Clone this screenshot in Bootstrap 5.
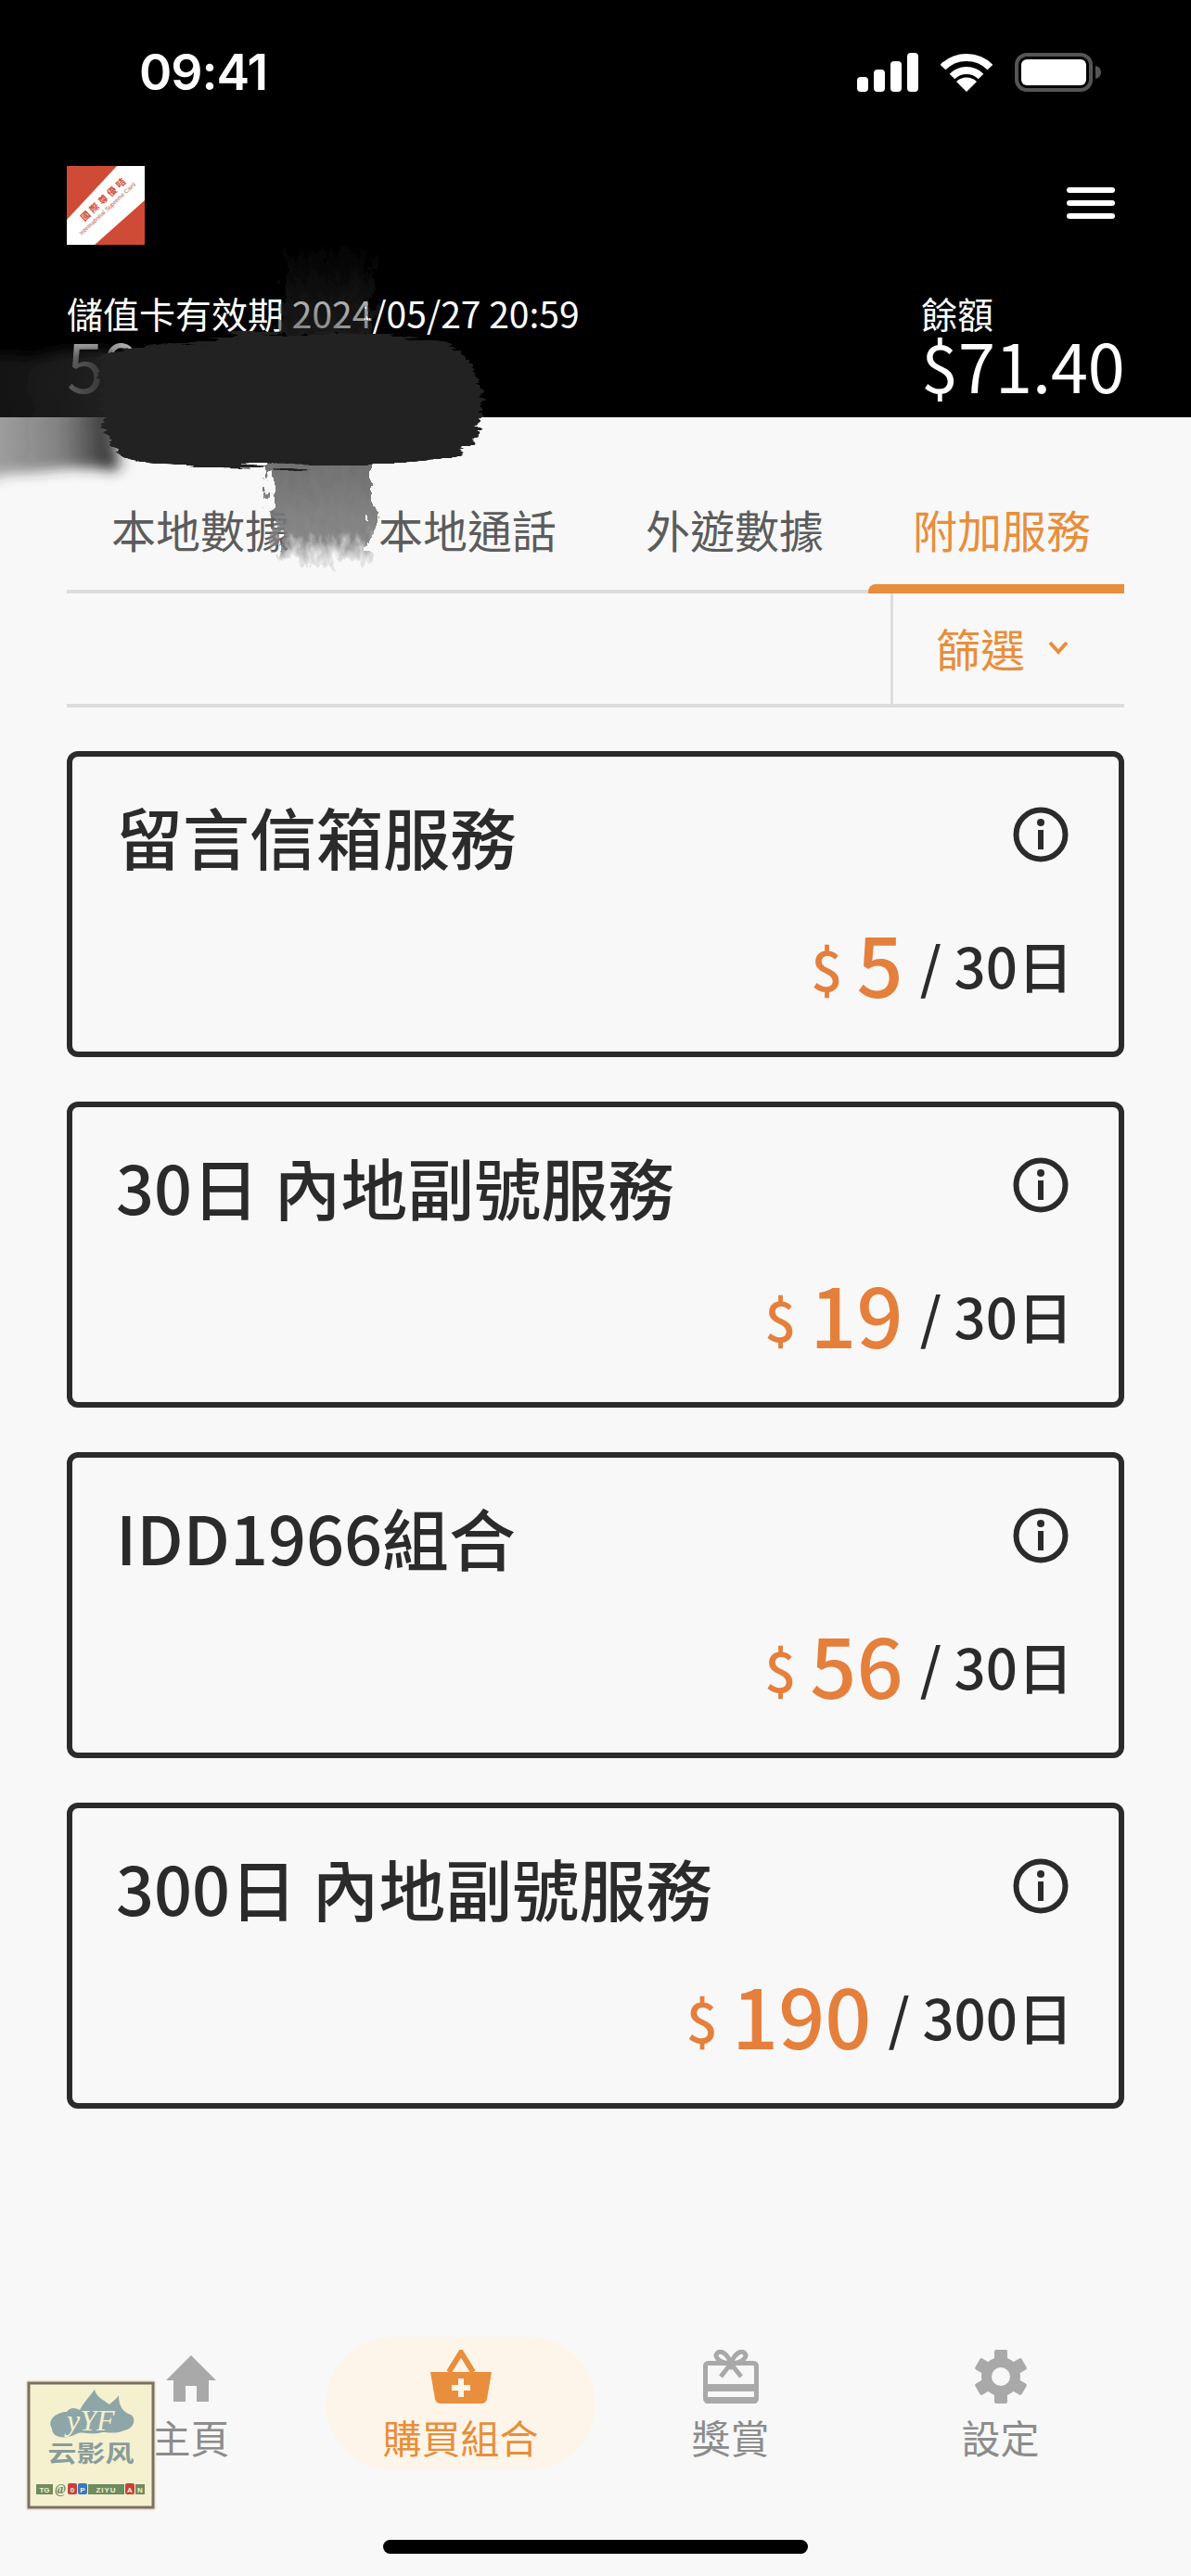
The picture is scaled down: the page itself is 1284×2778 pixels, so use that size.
<!DOCTYPE html>
<html lang="zh-Hant">
<head>
  <meta charset="UTF-8">
  <title>附加服務</title>
  <meta name="viewport" content="width=device-width, initial-scale=1">
  <link href="https://cdn.jsdelivr.net/npm/bootstrap@5.3.0/dist/css/bootstrap.min.css" rel="stylesheet">
  <style>
    html, body { width: 1284px; height: 2778px; overflow: hidden; }
    body { background: #f8f8f8; font-family: "Noto Sans CJK TC", "Noto Sans", sans-serif; color: #2b2b2b; position: relative; }
    .page-wrap { height: 2778px; }

    /* header */
    .hero { height: 450px; background: #000; color: #fff; padding: 0 72px; }
    .status-row { height: 55px; margin-top: 50px; padding: 0 50px 0 78px; margin-right: -26px; }
    .status-time { font-family: Inter, "Liberation Sans", sans-serif; font-size: 53.500px; font-weight: 600; line-height: 55px; letter-spacing: -1px; }
    .status-icons { gap: 22px; }
    .brand-row { height: 85px; margin-top: 74px; padding-right: 10px; }
    .menu-lines { width: 52px; gap: 8px; margin-bottom: 6px; }
    .menu-lines span { height: 6px; background: #fff; border-radius: 3px; }
    .info-row { margin-top: 52px; }
    .info-label { font-size: 39px; line-height: 42px; }
    .info-value { font-size: 72px; line-height: 70px; font-weight: 400; }
    .info-value.acct-num { color: #aaa; }
    .balance-col { width: 219px; }

    /* tabs */
    .tab-strip { margin: 0 72px; height: 190px; overflow: hidden; }
    .tab-list { margin-top: 78px; height: 112px; width: 1140px; flex-wrap: nowrap; border-bottom: 4px solid #ddd; position: relative; }
    .tab-item { flex: 0 0 288px; text-align: center; font-size: 48px; line-height: 72px; color: #5c5c5c; padding: 6px 0 0; position: relative; }
    .tab-item:hover { color: #5c5c5c; }
    .tab-item.tab-on { color: #e88e3c; flex: 0 0 276px; white-space: nowrap; }
    .tab-item.tab-on::after { content: ""; position: absolute; left: 0; right: 0; bottom: -4px; height: 10px; background: #e88e3c; border-top-left-radius: 8px; }
    .tab-item.tab-on span { display: block; margin-right: -12px; }
    .filter-row { margin: 0 72px; height: 123px; border-bottom: 4px solid #ddd; }
    .filter-cell { width: 252px; border-left: 3px solid #ddd; color: #e88e3c; font-size: 48px; line-height: 72px; padding-left: 46px; padding-bottom: 3px; gap: 24px; }

    /* plans */
    .plan-list { margin: 47px 72px 0; gap: 48px; }
    .plan-box { height: 330px; border: 6px solid #2b2b2b; border-radius: 12px; background: transparent; padding: 40px 49px 0 47px; }
    .plan-title { font-size: 72px; font-weight: 500; line-height: 90px; color: #2b2b2b; margin: 0; }
    .plan-info { margin: 14px 5px 0 0; }
    .plan-price { margin-top: 37px; line-height: 100px; }
    .plan-cur { font-size: 60px; font-weight: 500; color: #e57f3c; margin-right: 15px; padding-top: 10px; }
    .plan-num { font-size: 88px; font-weight: 500; color: #e57f3c; margin-right: 18px; }
    .plan-per { font-size: 60px; font-weight: 500; color: #2b2b2b; padding-top: 4px; }

    /* bottom nav */
    .bottom-nav { position: absolute; left: 60px; right: 60px; top: 2520px; }
    .nav-cell { flex: 0 0 291px; height: 144px; color: #8c8c8c; font-size: 42px; line-height: 50px; border-radius: 72px; padding-top: 11px; }
    .nav-cell.nav-on { background: #fdf5e9; color: #e88e3c; }
    .nav-glyph { height: 58px; margin-bottom: 14px; }
    .home-bar { position: absolute; left: 413px; top: 2739px; width: 458px; height: 15px; background: #000; border-radius: 8px; }

    /* overlays */
    .scribble { position: absolute; left: 0; top: 0; pointer-events: none; }
    .stamp { position: absolute; left: 26px; top: 2565px; }
  </style>
</head>
<body>
<div class="page-wrap d-flex flex-column">

  <!-- Black account header -->
  <header class="hero">
    <div class="status-row d-flex justify-content-between align-items-center">
      <span class="status-time">09:41</span>
      <div class="status-icons d-flex align-items-center">
        <svg width="66" height="42" viewBox="0 0 66 42"><rect x="0" y="26" width="12" height="16" rx="4" fill="#fff"/><rect x="18" y="18" width="12" height="24" rx="4" fill="#fff"/><rect x="36" y="9" width="12" height="33" rx="4" fill="#fff"/><rect x="54" y="0" width="12" height="42" rx="4" fill="#fff"/></svg>
        <svg width="60" height="42" viewBox="0 0 60 42"><path d="M4.500 15.500A36 36 0 0 1 55.500 15.500M14.500 25.500A22 22 0 0 1 45.500 25.500" fill="none" stroke="#fff" stroke-width="8"/><path d="M30 42L19 31A15.500 15.500 0 0 1 41 31Z" fill="#fff"/></svg>
        <svg width="94" height="42" viewBox="0 0 94 42"><rect x="2" y="2" width="80" height="38" rx="11" fill="none" stroke="#555" stroke-width="4"/><rect x="7" y="7" width="70" height="28" rx="6" fill="#fff"/><path d="M87 14C91 15 93 18 93 21S91 27 87 28Z" fill="#555"/></svg>
      </div>
    </div>

    <div class="brand-row d-flex justify-content-between align-items-center">
      <svg width="84" height="85" viewBox="0 0 84 85">
        <rect width="84" height="85" fill="#cf4b35"/>
        <path d="M54 0H84V37L30 85H0V58Z" fill="#fff"/>
        <text transform="translate(19 60) rotate(-43)" font-family="Noto Sans CJK TC, serif" font-size="10" font-weight="700" fill="#cf4b35" letter-spacing="3">國際尊優咭</text>
        <text transform="translate(16 75) rotate(-43)" font-family="Liberation Sans, sans-serif" font-size="6.500" fill="#b8574a">International Supreme Card</text>
      </svg>
      <div class="menu-lines d-flex flex-column">
        <span></span><span></span><span></span>
      </div>
    </div>

    <div class="info-row d-flex justify-content-between">
      <div>
        <div class="info-label">儲值卡有效期 2024/05/27 20:59</div>
        <div class="info-value acct-num">59</div>
      </div>
      <div class="balance-col">
        <div class="info-label">餘額</div>
        <div class="info-value">$71.40</div>
      </div>
    </div>
  </header>

  <!-- Tabs -->
  <div class="tab-strip">
    <nav class="nav tab-list">
      <a class="nav-link tab-item" href="#">本地數據</a>
      <a class="nav-link tab-item" href="#">本地通話</a>
      <a class="nav-link tab-item" href="#">外遊數據</a>
      <a class="nav-link tab-item tab-on" href="#"><span>附加服務</span></a>
    </nav>
  </div>

  <div class="filter-row d-flex justify-content-end">
    <div class="filter-cell d-flex align-items-center">
      <span>篩選</span>
      <svg width="24" height="16" viewBox="0 0 24 16"><path d="M3 3L12 13L21 3" fill="none" stroke="#e88e3c" stroke-width="4"/></svg>
    </div>
  </div>

  <!-- Plans -->
  <div class="plan-list d-flex flex-column" id="planList"></div>

</div>

<!-- Bottom navigation -->
<nav class="bottom-nav d-flex">
  <a class="nav-cell d-flex flex-column align-items-center text-decoration-none" href="#">
    <div class="nav-glyph">
      <svg width="54" height="54" viewBox="0 -4 54 54"><path d="M27 0L54 27H46V50H33V33H21V50H8V27H0Z" fill="#a9a9a9"/></svg>
    </div>
    <span>主頁</span>
  </a>
  <a class="nav-cell nav-on d-flex flex-column align-items-center text-decoration-none" href="#">
    <div class="nav-glyph">
      <svg width="66" height="58" viewBox="0 0 66 58"><path d="M20 24L33 3L46 24" fill="none" stroke="#e88e3c" stroke-width="6"/><path d="M0 24H66L61 53Q60 58 55 58H11Q6 58 5 53Z" fill="#e88e3c"/><path d="M33 31V51M23 41H43" stroke="#fdf5e9" stroke-width="6"/></svg>
    </div>
    <span>購買組合</span>
  </a>
  <a class="nav-cell d-flex flex-column align-items-center text-decoration-none" href="#">
    <div class="nav-glyph">
      <svg width="60" height="58" viewBox="0 0 60 58"><rect x="2.500" y="14.500" width="55" height="41" rx="3" fill="none" stroke="#a9a9a9" stroke-width="5"/><rect x="2" y="37" width="56" height="8" fill="#a9a9a9"/><rect x="2" y="51" width="56" height="7" rx="2" fill="#a9a9a9"/><path d="M30 15C26 3 18 0 15 4S17 14 30 15C43 14 48 8 45 4S34 3 30 15ZM30 15L19 29M30 15L41 29" fill="none" stroke="#a9a9a9" stroke-width="5"/></svg>
    </div>
    <span>獎賞</span>
  </a>
  <a class="nav-cell d-flex flex-column align-items-center text-decoration-none" href="#">
    <div class="nav-glyph">
      <svg width="58" height="58" viewBox="0 0 58 58">
        <g fill="#a9a9a9">
          <rect x="22" y="0" width="14" height="58" rx="2"/>
          <rect x="22" y="0" width="14" height="58" rx="2" transform="rotate(60 29 29)"/>
          <rect x="22" y="0" width="14" height="58" rx="2" transform="rotate(120 29 29)"/>
          <circle cx="29" cy="29" r="21"/>
        </g>
        <circle cx="29" cy="29" r="10" fill="#f8f8f8"/>
      </svg>
    </div>
    <span>設定</span>
  </a>
</nav>
<div class="home-bar"></div>

<!-- Brush-stroke redaction over the account number -->
<svg class="scribble" width="1284" height="640" viewBox="0 0 1284 640">
  <defs>
    <filter id="brush" x="-20%" y="-20%" width="140%" height="140%">
      <feTurbulence type="fractalNoise" baseFrequency="0.012 0.16" numOctaves="3" seed="4"/>
      <feDisplacementMap in="SourceGraphic" scale="24" xChannelSelector="R" yChannelSelector="G"/>
    </filter>
    <filter id="smudge" x="-20%" y="-20%" width="140%" height="140%">
      <feTurbulence type="fractalNoise" baseFrequency="0.01 0.12" numOctaves="3" seed="11"/>
      <feDisplacementMap in="SourceGraphic" scale="30" xChannelSelector="R" yChannelSelector="G"/>
      <feGaussianBlur stdDeviation="7"/>
    </filter>
    <filter id="speck" x="-30%" y="-20%" width="160%" height="140%">
      <feTurbulence type="fractalNoise" baseFrequency="0.09 0.05" numOctaves="4" seed="8"/>
      <feDisplacementMap in="SourceGraphic" scale="38" xChannelSelector="R" yChannelSelector="G"/>
    </filter>
    <linearGradient id="smearLeft" x1="0" x2="1" y1="0" y2="0">
      <stop offset="0" stop-color="#333" stop-opacity=".38"/>
      <stop offset=".65" stop-color="#2a2a2a" stop-opacity=".6"/>
      <stop offset="1" stop-color="#232323" stop-opacity=".95"/>
    </linearGradient>
    <linearGradient id="tailUp" x1="0" x2="0" y1="0" y2="1">
      <stop offset="0" stop-color="#2c2c2c" stop-opacity="0"/>
      <stop offset=".6" stop-color="#2c2c2c" stop-opacity=".4"/>
      <stop offset="1" stop-color="#2c2c2c" stop-opacity=".6"/>
    </linearGradient>
    <linearGradient id="tailDown" x1="0" x2="0" y1="0" y2="1">
      <stop offset="0" stop-color="#6e6e6e"/>
      <stop offset=".75" stop-color="#7a7a7a" stop-opacity=".9"/>
      <stop offset="1" stop-color="#999" stop-opacity=".15"/>
    </linearGradient>
  </defs>
  <path d="M305 262H402V366H305Z" fill="url(#tailUp)" filter="url(#speck)"/>
  <path d="M286 488H402V606H300Z" fill="url(#tailDown)" filter="url(#speck)"/>
  <path d="M-30 386L125 376V505L60 500L-30 520Z" fill="url(#smearLeft)" filter="url(#smudge)"/>
  <path d="M112 380C200 362 330 358 430 360C490 362 518 390 520 432C522 470 506 494 460 498C360 506 220 508 150 498C118 492 104 450 108 420C108 404 108 392 112 380Z" fill="#232323" filter="url(#brush)"/>
</svg>

<!-- Watermark stamp in the corner -->
<svg class="stamp" width="144" height="144" viewBox="0 0 144 144">
  <rect x="3" y="3" width="138" height="138" rx="2" fill="#f5f1cf" stroke="#efe9d8" stroke-width="3"/>
  <rect x="5" y="5" width="134" height="134" fill="none" stroke="#7a6f63" stroke-width="3"/>
  <path d="M30 54C24 44 36 36 46 36C50 30 56 32 60 34C64 26 70 20 76 12C78 20 84 22 92 28C96 24 100 22 102 18C102 30 106 34 112 38C122 40 120 54 108 56C100 60 90 58 84 58C70 62 64 56 56 60C44 66 30 64 30 54Z" fill="#8fa6a8"/>
  <text x="46" y="56" font-family="Liberation Serif, serif" font-size="32" font-style="italic" fill="#f5f1cf">yYF</text>
  <text transform="translate(72 90) scale(1 .8)" text-anchor="middle" font-family="Noto Sans CJK SC, sans-serif" font-size="31" font-weight="700" fill="#8a9c9c">云影风</text>
  <g font-family="Liberation Sans, sans-serif" font-size="8" font-weight="700" text-anchor="middle" fill="#f5f1cf">
    <rect x="13" y="114" width="18" height="11" fill="#6f8b60"/><text x="22" y="123">TG</text>
    <text x="39" y="124" font-family="Liberation Serif, serif" font-size="14" font-style="italic" fill="#6f8b60">@</text>
    <rect x="47" y="113" width="10" height="12" rx="2" fill="#c4423a"/><text x="52" y="123">0</text>
    <rect x="58" y="113" width="10" height="12" rx="2" fill="#3a77c4"/><text x="63" y="123">P</text>
    <rect x="69" y="114" width="39" height="11" fill="#6f8b60"/><text x="88.500" y="123" letter-spacing="1">ZIYU</text>
    <rect x="109" y="113" width="10" height="12" rx="2" fill="#c4423a"/><text x="114" y="123">A</text>
    <rect x="120" y="114" width="10" height="11" fill="#6f8b60"/><text x="125" y="123">N</text>
  </g>
</svg>

<script>
  // Plans shown on the add-on tab
  const plans = [
    { title: '留言信箱服務', price: '5', period: '30日' },
    { title: '30日 內地副號服務', price: '19', period: '30日' },
    { title: 'IDD1966組合', price: '56', period: '30日' },
    { title: '300日 內地副號服務', price: '190', period: '300日' }
  ];

  const infoIcon = `<svg class="plan-info flex-shrink-0" width="60" height="60" viewBox="0 0 60 60">
    <circle cx="30" cy="30" r="26.500" fill="none" stroke="#2b2b2b" stroke-width="6"/>
    <rect x="27" y="25" width="6" height="21" fill="#2b2b2b"/><circle cx="30" cy="17" r="4" fill="#2b2b2b"/></svg>`;

  document.getElementById('planList').innerHTML = plans.map(p => `
    <div class="card plan-box">
      <div class="d-flex justify-content-between align-items-start">
        <h5 class="plan-title">${p.title}</h5>
        ${infoIcon}
      </div>
      <div class="plan-price d-flex justify-content-end align-items-center">
        <span class="plan-cur">$</span><span class="plan-num">${p.price}</span><span class="plan-per">/ ${p.period}</span>
      </div>
    </div>`).join('');
</script>
<script src="https://cdn.jsdelivr.net/npm/bootstrap@5.3.0/dist/js/bootstrap.bundle.min.js"></script>
</body>
</html>
